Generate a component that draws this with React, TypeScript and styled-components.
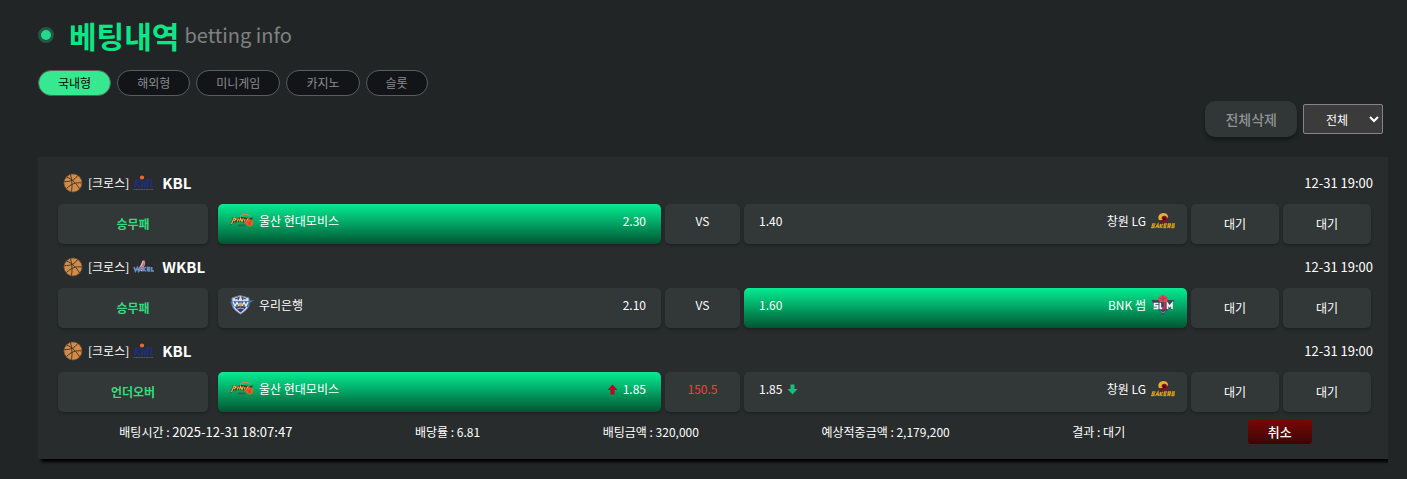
import React from "react";
import styled, { createGlobalStyle } from "styled-components";

const GlobalStyle = createGlobalStyle`
  * { box-sizing: border-box; }
  body {
    margin: 0;
    background: #222526;
    color: #fff;
    font-family: "Noto Sans CJK KR", "Noto Sans", sans-serif;
    font-size: 12px;
    line-height: 18px;
  }
  button, select { font-family: inherit; }
`;

const Page = styled.main`
  padding: 11px 19px 16px 38px;
`;

const Heading = styled.header`
  display: flex;
  align-items: center;
  height: 48px;
`;

const Dot = styled.span`
  width: 16px;
  height: 16px;
  margin-right: 15px;
  border: 3px solid #245744;
  border-radius: 50%;
  background: #22da8c;
`;

const Title = styled.h1`
  margin: 0;
  color: #0be786;
  font-size: 30px;
  font-weight: 700;
  line-height: 48px;
`;

const Subtitle = styled.small`
  margin-left: 5px;
  color: #808282;
  font-size: 20px;
  font-weight: 400;
`;

const Tabs = styled.nav`
  display: flex;
  gap: 6px;
  margin-top: 11px;
`;

const Tab = styled.button<{ $active?: boolean }>`
  height: 26px;
  padding: 0 19px;
  border: 1px solid #5a5c5d;
  border-radius: 13px;
  background: ${(p) => (p.$active ? "#36e88f" : "#131418")};
  color: ${(p) => (p.$active ? "#000" : "#8b8c8e")};
  font-size: 12px;
  line-height: 24px;
`;

const Tools = styled.div`
  display: flex;
  justify-content: flex-end;
  align-items: center;
  gap: 6px;
  padding: 5px 5px 0 0;
`;

const DeleteAll = styled.button`
  height: 36px;
  padding: 0 20px;
  border: 0;
  border-radius: 10px;
  background: #313637;
  color: #8f9394;
  font-size: 14px;
  font-weight: 500;
  box-shadow: 0 3px 4px rgba(0, 0, 0, 0.4);
`;

const Filter = styled.select`
  width: 80px;
  height: 30px;
  border: 1px solid #858585;
  border-radius: 2px;
  background: #3b3b3b;
  color: #fff;
  font-size: 12px;
  text-align-last: center;
`;

const Panel = styled.section`
  margin-top: 20px;
  padding: 3px 0 8px;
  background: #292c2d;
  box-shadow: 3px 3px 3px #000;
  clip-path: inset(0 0 -8px 0);
`;

const MatchHead = styled.div`
  display: flex;
  align-items: center;
  height: 44px;
  padding: 2px 15px 0 25px;
`;

const Category = styled.span`
  margin: 0 4px 0 5px;
`;

const League = styled.strong`
  margin-left: 8px;
  font-size: 15px;
  font-weight: 700;
`;

const Time = styled.time`
  font-size: 13px;
`;

const MatchTime = styled(Time)`
  margin-left: auto;
`;

const MatchRow = styled.div`
  display: grid;
  grid-template-columns: 156px 1fr 75px 1fr 88px 88px;
  gap: 4px;
  padding: 0 17px 0 20px;
`;

const Tile = styled.div`
  display: flex;
  align-items: center;
  justify-content: center;
  height: 40px;
  border-radius: 5px;
  background: #323737;
  box-shadow: 0 2px 3px rgba(0, 0, 0, 0.25);
`;

const TypeTile = styled(Tile)`
  margin-right: 6px;
  color: #34dc7c;
  font-weight: 700;
`;

const CenterTile = styled(Tile)<{ $line?: boolean }>`
  padding-bottom: 6px;
  color: ${(p) => (p.$line ? "#f04438" : "#fff")};
`;

const TeamTile = styled(Tile)<{ $picked?: boolean; $away?: boolean }>`
  justify-content: space-between;
  padding: ${(p) => (p.$away ? "0 12px 6px 15px" : "0 15px 6px 12px")};
  background: ${(p) => (p.$picked ? "linear-gradient(#05ec92, #005632)" : "#323737")};
`;

const Team = styled.span`
  display: flex;
  align-items: center;
  gap: 5px;
`;

const Summary = styled.div`
  display: flex;
  align-items: center;
  justify-content: space-around;
  height: 39px;
  padding: 0 15px 0 20px;
`;

const Cancel = styled.button`
  height: 25px;
  padding: 0 20px;
  border: 0;
  border-radius: 3px;
  background: linear-gradient(#7a0708, #3c0505);
  color: #fff;
  font-size: 13px;
  font-weight: 500;
`;

const Svg = styled.svg`
  display: block;
  flex: none;
`;

const Basketball = () => (
  <Svg width="20" height="20" viewBox="0 0 20 20" fill="none">
    <circle cx="10" cy="10" r="9" fill="#cf8c4b" stroke="#7a5233" strokeWidth="0.7" />
    <g stroke="#40301f" strokeWidth="0.9">
      <path d="M3.500 4C9 6 14 11 16.500 16" />
      <path d="M1.500 8.500C7 9 12 7 14.500 2.500" />
      <path d="M7.500 1.500C9 7 9.500 13 8.500 18.500" />
      <path d="M3.500 15.500C8 11 13 9 18.800 10" />
    </g>
  </Svg>
);

const KblLogo = () => (
  <Svg width="21" height="18" viewBox="0 0 21 18" fill="none">
    <g stroke="#1d2f80" strokeWidth="1.500">
      <path d="M3.500 5L1.500 13.500" strokeWidth="2" />
      <path d="M8 5L3 9.500L6.500 13.500" />
      <path d="M9.800 7L8.500 13.500" strokeWidth="2" />
      <path d="M13 5.700H15.500L15.200 9H12.300M15 9.300L14.300 12.700H11.300M13 5.700L11.300 13" />
      <path d="M19 5L17.500 12.700H20.500" />
    </g>
    <circle cx="9" cy="3.500" r="2.100" fill="#ec6a2c" />
    <path d="M0.500 15.500H20.500" stroke="#4c5878" strokeWidth="1.200" strokeDasharray="2 0.500" />
  </Svg>
);

const WkblLogo = () => (
  <Svg width="21" height="18" viewBox="0 0 21 18" fill="none">
    <path d="M6 13.500C5.500 11 9 8 10 3.500C12.500 3 11 7 9.500 10L8 13" stroke="#dfb6c4" strokeWidth="1.700" />
    <path d="M11 2.500C12 5 9.500 9 8.500 12" stroke="#d8536d" strokeWidth="1.200" />
    <g stroke="#6a8fc4" strokeWidth="1.600">
      <path d="M1 9L2.500 13L4.500 9.500L5.500 13L8 9" />
      <path d="M10 9V13.500M13 9L10.500 11L13 13.500" />
      <path d="M14.500 13V9.500H16.500V13H14.500M14.500 11.200H17M18.700 9V13H21" />
    </g>
  </Svg>
);

const PhoebusLogo = () => (
  <Svg width="24" height="18" viewBox="0 0 24 18" fill="none">
    <path d="M10 4.500C13 1.500 18 2 21 4.500" stroke="#e08a32" strokeWidth="1" />
    <path d="M0 13.500L3 5L7 6L12 5L19 6L23 5.500L21 10L14 10.500L9 10L4 10.500Z" fill="#46401f" />
    <path d="M1.500 12L4 6L6.300 7L4 9M7.300 9.500L8.500 6.500M9.500 9.500L10.500 6.500L12 9.500L13.300 6.500M15 7L14.500 9.500M16.500 9.500L17.500 7H19.500" stroke="#efb74e" strokeWidth="1.100" />
    <path d="M14 10C17 8 20 7 22 8C24.500 10 23 14.500 19.500 14.500C17 14.500 16.500 12 14 10Z" fill="#ea5e2c" />
    <path d="M17 10L21 12.500M20.500 8.500L19 13.500" stroke="#ad3720" strokeWidth="0.700" />
    <path d="M8 13.500H15" stroke="#3e5b43" strokeWidth="1.800" />
  </Svg>
);

const WooriLogo = () => (
  <Svg width="24" height="20" viewBox="0 0 24 20" fill="none">
    <path d="M2 3L10 0.500L19 3V10C18 14 14 17 10.500 19C7 17 3 14 2 10Z" fill="#d9deeb" stroke="#747b9f" />
    <path d="M4 10H17C16 13 13 16 10.500 17.500C8 16 5 13 4 10Z" fill="#373b73" />
    <path d="M5 4L9 2.500L8 5M16 4L12 2.500L13 5" stroke="#393d70" strokeWidth="1.200" />
    <path d="M0 7L5 6H18L24 5L20 8L18 12H14L11 9L8 12H4Z" fill="#4776ad" />
    <path d="M3 7L5 11L7 7.500L9 11M12 11L14 7.500L16 11L18 7" stroke="#f0f4fb" strokeWidth="1.200" />
    <circle cx="10.500" cy="9.500" r="2" fill="#e6a242" />
    <path d="M7 14L10.500 13L14 14" stroke="#a5aecd" />
  </Svg>
);

const SakersLogo = () => (
  <Svg width="24" height="18" viewBox="0 0 24 18" fill="none">
    <circle cx="12.500" cy="6.500" r="4.500" fill="#7c142b" />
    <path d="M8 8C6 4 9 1 12.500 1C16 1 18 4 16.500 6.500C16 3.500 12 3 11 5C10 6 10.500 7 12 8Z" fill="#eab02b" />
    <path d="M12 5L15 7L12 9Z" fill="#321019" />
    <g stroke="#d39a16" strokeWidth="1.300">
      <path d="M4.500 12H1.800L1.300 13.800H3.300L2.800 15.500H0" />
      <path d="M4.500 16L7 12L7.500 16M5.500 14.500H7.500" />
      <path d="M9.500 12L8.800 16M12.200 12L9.500 14L11.300 16" />
      <path d="M16 12H13.700L12.900 15.500H15.300M13.300 13.800H15.300" />
      <path d="M16.700 16L17.400 12H19.500L19.200 14H17.400L19 16" />
      <path d="M24 12H21.700L21.200 13.800H23.200L22.700 15.500H20.200" />
    </g>
  </Svg>
);

const SumLogo = () => (
  <Svg width="24" height="20" viewBox="0 0 24 20" fill="none">
    <path d="M0.500 5H23L21.500 9V14H17L12 20L7 14H2.500V9Z" fill="#3a455f" />
    <path d="M7 5C7 -1 17 -1 17 5L15 7H9Z" fill="#e34559" />
    <path d="M8.500 3C11 4.500 13 4.500 15.500 3M12 0.500V6" stroke="#a32a43" strokeWidth="0.700" />
    <g stroke="#eef0f4" strokeWidth="1.700">
      <path d="M7.500 8.500H3.500V10.900H6.700V13.300H2.500" />
      <path d="M9.300 7.700V13.300H11.500" />
      <path d="M16.500 14V8.500L18.700 11.500L21 8.500V14" />
    </g>
    <path d="M11.500 13.300H13.700V7" stroke="#d92e49" strokeWidth="1.900" />
    <path d="M9.500 16L12 18L14.500 16" stroke="#8490a5" />
  </Svg>
);

const Arrow = ({ down = false }: { down?: boolean }) => (
  <Svg width="11" height="11" viewBox="0 0 11 11">
    {down ? (
      <path d="M3.500 0.500H7.500V5H10.500L5.500 10.500L0.500 5H3.500Z" fill="#0dc47c" />
    ) : (
      <path d="M3.500 10.500H7.500V6H10.500L5.500 0.500L0.500 6H3.500Z" fill="#b90527" />
    )}
  </Svg>
);

interface Side {
  name: string;
  logo: React.ReactNode;
  odds: string;
  arrow?: React.ReactNode;
  picked?: boolean;
}

interface Match {
  league: string;
  leagueLogo: React.ReactNode;
  type: string;
  center: string;
  line?: boolean;
  home: Side;
  away: Side;
}

const matches: Match[] = [
  {
    league: "KBL",
    leagueLogo: <KblLogo />,
    type: "승무패",
    center: "VS",
    home: { name: "울산 현대모비스", logo: <PhoebusLogo />, odds: "2.30", picked: true },
    away: { name: "창원 LG", logo: <SakersLogo />, odds: "1.40" },
  },
  {
    league: "WKBL",
    leagueLogo: <WkblLogo />,
    type: "승무패",
    center: "VS",
    home: { name: "우리은행", logo: <WooriLogo />, odds: "2.10" },
    away: { name: "BNK 썸", logo: <SumLogo />, odds: "1.60", picked: true },
  },
  {
    league: "KBL",
    leagueLogo: <KblLogo />,
    type: "언더오버",
    center: "150.5",
    line: true,
    home: { name: "울산 현대모비스", logo: <PhoebusLogo />, odds: "1.85", arrow: <Arrow />, picked: true },
    away: { name: "창원 LG", logo: <SakersLogo />, odds: "1.85", arrow: <Arrow down /> },
  },
];

const tabs = ["국내형", "해외형", "미니게임", "카지노", "슬롯"];

export default function App() {
  return (
    <>
      <GlobalStyle />
      <Page>
        <Heading>
          <Dot />
          <Title>베팅내역</Title>
          <Subtitle>betting info</Subtitle>
        </Heading>
        <Tabs>
          {tabs.map((tab, i) => (
            <Tab key={tab} type="button" $active={i === 0}>
              {tab}
            </Tab>
          ))}
        </Tabs>
        <Tools>
          <DeleteAll type="button">전체삭제</DeleteAll>
          <Filter aria-label="전체" defaultValue="all">
            <option value="all">전체</option>
          </Filter>
        </Tools>
        <Panel>
          {matches.map((m, i) => (
            <article key={i}>
              <MatchHead>
                <Basketball />
                <Category>[크로스]</Category>
                {m.leagueLogo}
                <League>{m.league}</League>
                <MatchTime>12-31 19:00</MatchTime>
              </MatchHead>
              <MatchRow>
                <TypeTile>{m.type}</TypeTile>
                <TeamTile $picked={m.home.picked}>
                  <Team>
                    {m.home.logo}
                    {m.home.name}
                  </Team>
                  <Team>
                    {m.home.arrow}
                    {m.home.odds}
                  </Team>
                </TeamTile>
                <CenterTile $line={m.line}>{m.center}</CenterTile>
                <TeamTile $away $picked={m.away.picked}>
                  <Team>
                    {m.away.odds}
                    {m.away.arrow}
                  </Team>
                  <Team>
                    {m.away.name}
                    {m.away.logo}
                  </Team>
                </TeamTile>
                <Tile>대기</Tile>
                <Tile>대기</Tile>
              </MatchRow>
            </article>
          ))}
          <Summary>
            <span>
              배팅시간 : <Time>2025-12-31 18:07:47</Time>
            </span>
            <span>배당률 : 6.81</span>
            <span>배팅금액 : 320,000</span>
            <span>예상적중금액 : 2,179,200</span>
            <span>결과 : 대기</span>
            <Cancel type="button">취소</Cancel>
          </Summary>
        </Panel>
      </Page>
    </>
  );
}
